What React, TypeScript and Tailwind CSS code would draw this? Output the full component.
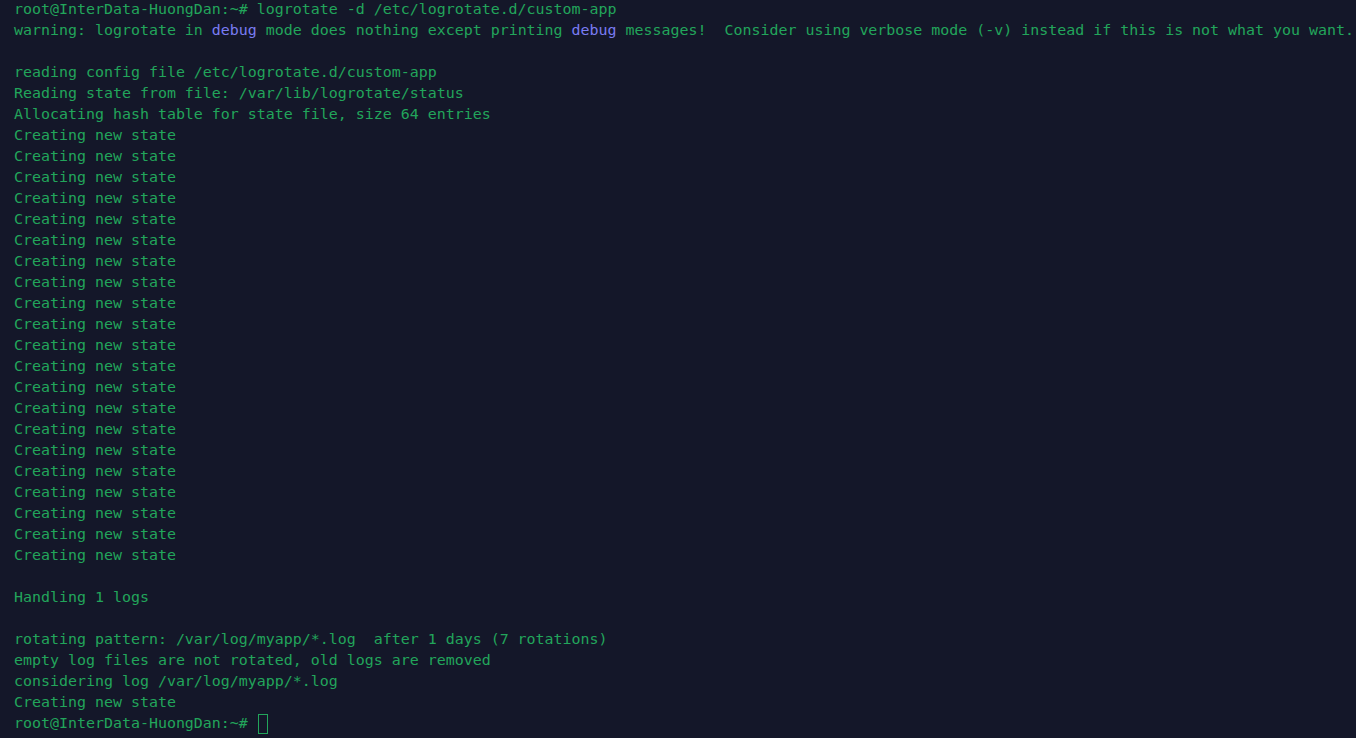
import React from "react";

const prompt = "root@InterData-HuongDan:~# ";

type Seg = { t: string; c?: "debug" };

const lines: Seg[][] = [
  [{ t: prompt + "logrotate -d /etc/logrotate.d/custom-app" }],
  [
    { t: "warning: logrotate in " },
    { t: "debug", c: "debug" },
    { t: " mode does nothing except printing " },
    { t: "debug", c: "debug" },
    { t: " messages!  Consider using verbose mode (-v) instead if this is not what you want." },
  ],
  [],
  [{ t: "reading config file /etc/logrotate.d/custom-app" }],
  [{ t: "Reading state from file: /var/lib/logrotate/status" }],
  [{ t: "Allocating hash table for state file, size 64 entries" }],
  ...Array.from({ length: 21 }, () => [{ t: "Creating new state" }]),
  [],
  [{ t: "Handling 1 logs" }],
  [],
  [{ t: "rotating pattern: /var/log/myapp/*.log  after 1 days (7 rotations)" }],
  [{ t: "empty log files are not rotated, old logs are removed" }],
  [{ t: "considering log /var/log/myapp/*.log" }],
  [{ t: "Creating new state" }],
];

export default function App() {
  return (
    <div className="w-[1356px] h-[738px] overflow-hidden bg-[#141729]">
      <div className="text-[#22a55b] font-['DejaVu_Sans_Mono',monospace] text-[14.95px] leading-[21px] whitespace-pre pl-[14px] -mt-[1px]">
        {lines.map((segs, i) => (
          <div key={i} className="h-[21px]">
            {segs.map((s, j) =>
              s.c === "debug" ? (
                <span key={j} className="text-[#7a7cf2]">{s.t}</span>
              ) : (
                <span key={j}>{s.t}</span>
              )
            )}
          </div>
        ))}
        <div className="h-[21px] flex items-center">
          <span>{prompt}</span>
          <span className="inline-block w-[10px] h-[20px] border border-[#22a55b] ml-[1px]" />
        </div>
      </div>
    </div>
  );
}
